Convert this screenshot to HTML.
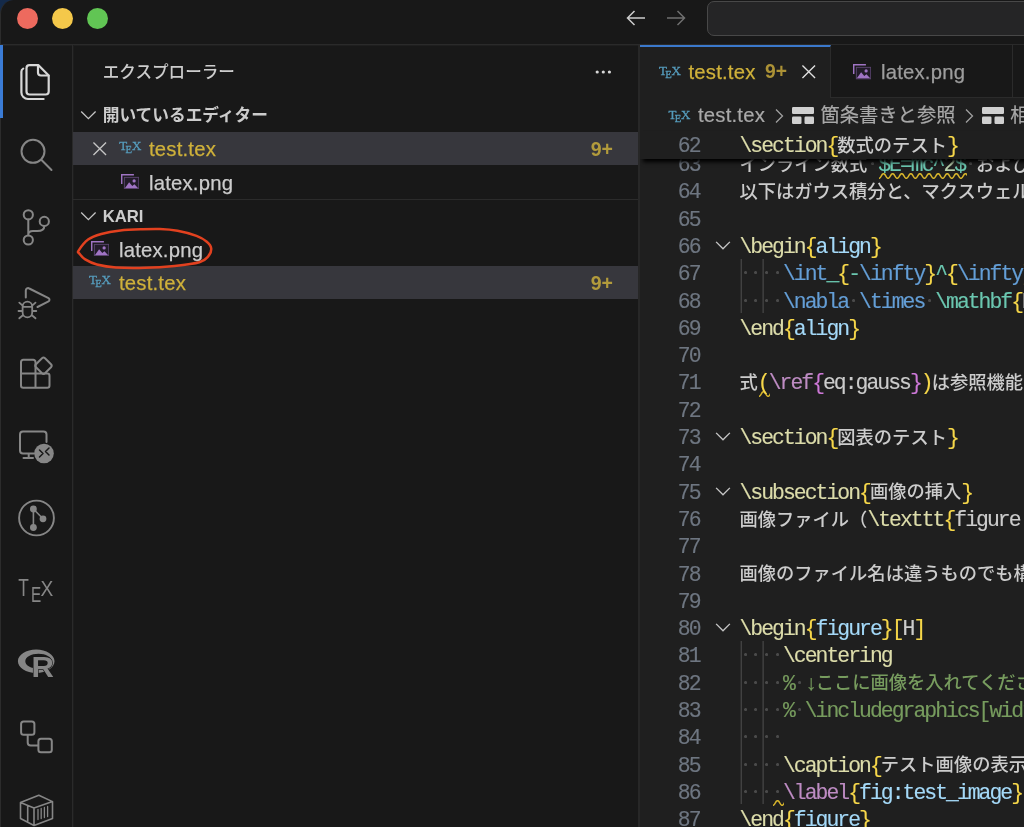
<!DOCTYPE html>
<html lang="ja">
<head>
<meta charset="utf-8">
<title>test.tex</title>
<style>
*{box-sizing:border-box;margin:0;padding:0}
html,body{width:1024px;height:827px;overflow:hidden;background:#181818}
body{position:relative;font-family:"Liberation Sans","Noto Sans CJK JP",sans-serif;color:#cccccc}
.abs{position:absolute}
#corner{left:0;top:0;width:14px;height:14px;background:#142a4a;z-index:0}
#win{left:0;top:0;width:1040px;height:840px;background:#181818;border-top-left-radius:14px;z-index:1;border-left:1px solid #2c2c2c}
#titlebar{left:0;top:0;width:1024px;height:45px;border-bottom:1px solid #2a2a2a;box-shadow:0 1px 0 #1f1f1f;z-index:2}
.tl{top:7.7px;width:21px;height:21px;border-radius:50%}
#search{left:707px;top:1px;width:340px;height:35px;background:#252526;border:1px solid #484848;border-radius:7px}
#activity{left:0;top:45px;width:73px;height:790px;border-right:1px solid #2a2a2a;box-shadow:1px 0 0 #1d1d1d;z-index:2}
#indicator{left:0;top:45px;width:3px;height:73px;background:#3a7bd5;z-index:3}
#sidebar{left:73px;top:45px;width:565px;height:790px;z-index:2}
#sidebar .row{position:absolute;left:0;width:565px;height:33px}
#sidebar .sel{background:#37373d}
.lbl{position:absolute;margin-top:0.5px;-webkit-text-stroke:0.25px currentColor;font-size:20.3px;letter-spacing:0.2px;line-height:33px;white-space:nowrap}
.warn{color:#cfb13a}
.hdr{position:absolute;font-size:16.7px;margin-left:-1.3px;margin-top:0.5px;font-weight:bold;line-height:33px;white-space:nowrap;color:#cccccc}
#editor{left:638px;top:45px;width:402px;height:790px;background:#1f1f1f;border-left:2px solid #272727;z-index:2;overflow:hidden}
#tabs{left:0;top:0;width:400px;height:53px;background:#181818;border-bottom:1px solid #2b2b2b}
.tab{position:absolute;top:0;height:53px;border-right:1px solid #2b2b2b}
#tab1{left:0;width:191px;background:#1f1f1f;border-top:2px solid #3b79cc;height:54px}
#tab2{left:191px;width:182px}
#crumbs{left:0;top:53px;width:400px;height:33.4px;background:#1f1f1f;white-space:nowrap;color:#a9a9a9}
.crl{-webkit-text-stroke:0.2px currentColor;font-size:20.3px;letter-spacing:0.2px;line-height:35px;white-space:nowrap;color:#a9a9a9}
#sticky{left:0;top:85.6px;width:400px;height:28.1px;background:#1f1f1f;box-shadow:2px 4px 4px -1px #000;z-index:5}
#code{left:0;top:0;width:400px;height:790px}
.ln{position:absolute;left:0;width:400px;height:27.29px;line-height:27.29px;font-family:"Liberation Mono","Noto Sans CJK JP",monospace;font-size:21.4px;letter-spacing:-1.97px;white-space:pre;color:#cccccc;-webkit-text-stroke:0.15px currentColor}
.ln .n{position:absolute;left:0;top:2.7px;width:59.6px;text-align:right;color:#6e7681}
.ln .t{position:absolute;left:99.5px;top:2.7px}
.ln .t .j{font-size:18.28px;letter-spacing:0;-webkit-text-stroke:0;font-weight:500;position:relative;top:-0.4px}
.y{color:#dcdcaa}.g{color:#f6d74a}.b{color:#649ed6}.t2{color:#6bc7b0}.lb{color:#a4d9f8}.c{color:#779c5e}.p{color:#be8cc3}.m{color:#cd78d7}.num{color:#b9cfac}
.sqg{position:absolute;top:23.3px;height:6px;overflow:hidden}
.ws{background:radial-gradient(circle at 5.6px 10.6px,#4a4a4a 1.1px,rgba(74,74,74,0) 1.9px)}
.guide{position:absolute;width:1px;background:#505050}
.fold{position:absolute;left:73px;top:4px;width:20px;height:20px}
.sq{background:none}

.tex{position:absolute;font-family:"Liberation Serif",serif;color:#519aba;white-space:nowrap;line-height:1;height:14px;width:22px;-webkit-text-stroke:0.3px #5a9fc0}
.tex b{position:absolute;font-weight:normal;font-size:13px;top:0}
.tex b.e{font-size:10.6px;top:6.2px}
.imgic{position:absolute;width:18.2px;height:15.3px;margin:0.3px 0 0 0.2px}
.chev{position:absolute;width:16px;height:16px}
.ai{position:absolute;left:0;width:72px;height:72px}
.tabl{position:absolute;-webkit-text-stroke:0.25px currentColor;font-size:20.3px;letter-spacing:0.2px;line-height:24px;white-space:nowrap}
</style>
</head>
<body>
<div id="root" style="position:absolute;left:0;top:0;width:1024px;height:827px;will-change:transform;overflow:hidden">
<div id="corner" class="abs"></div>
<div id="win" class="abs"></div>

<div id="titlebar" class="abs">
  <div class="abs tl" style="left:16.7px;background:#ed6a5e"></div>
  <div class="abs tl" style="left:52px;background:#f4c84a"></div>
  <div class="abs tl" style="left:86.8px;background:#61c554"></div>
  <div id="search" class="abs"></div>
<svg class="abs" style="left:626px;top:9px;width:20px;height:18px" viewBox="0 0 20 18"><path d="M19 9H1.500M8.500 2 1.500 9l7 7" fill="none" stroke="#cccccc" stroke-width="1.500"/></svg>
<svg class="abs" style="left:666px;top:9px;width:20px;height:18px" viewBox="0 0 20 18"><path d="M1 9h17.500M11.500 2l7 7-7 7" fill="none" stroke="#6f6f6f" stroke-width="1.500"/></svg>
</div>

<div id="indicator" class="abs"></div>
<div id="activity" class="abs">
<!--ACT-->
<svg class="abs" style="left:0;top:0;width:72px;height:790px" viewBox="0 45 72 790" fill="none" stroke="#868686" stroke-width="2" stroke-linecap="round" stroke-linejoin="round">
<!-- files -->
<g stroke="#d7d7d7" stroke-width="2.2">
<path d="M29.500 65.200H38.500L48.700 75.500V91.500a3 3 0 0 1-3 3H29.500a3 3 0 0 1-3-3V68.200a3 3 0 0 1 3-3Z"/>
<path d="M38 65.500V72.500a3 3 0 0 0 3 3H48.500"/>
<path d="M23.2 68.6A3.4 3.4 0 0 0 21.400 71.700V92.400a6.600 6.600 0 0 0 6.600 6.600H43.600"/>
</g>
<!-- search -->
<circle cx="33" cy="151.300" r="11.500"/>
<path d="M41.300 159.800 51.500 170"/>
<!-- source control -->
<circle cx="28.300" cy="214.800" r="4.600"/>
<circle cx="28.300" cy="240" r="4.600"/>
<circle cx="44.300" cy="221.400" r="4.600"/>
<path d="M28.300 219.500V235.300M44.300 226c0 4-3 5-7 5H33c-2.500 0-4.700 1-4.700 3.500"/>
<!-- debug -->
<path d="M25.800 297.500V290.500a2.300 2.300 0 0 1 3.500-2L48.500 298.200a1.800 1.800 0 0 1 0 3.200L37.500 307"/>
<path d="M22.6 306.5a4.8 4.8 0 0 1 9.6 0V312.5a4.8 4.8 0 0 1-9.6 0ZM22.6 306.8H32.2M22.4 311H18.5M32.4 311H36.3M22.9 305.8 19.3 302.6M31.9 305.8 35.5 302.6M23.2 315 19.3 318.3M31.6 315 35.5 318.3" stroke-width="1.8"/>
<!-- extensions -->
<path d="M35.500 373.600V362a2.200 2.200 0 0 0-2.200-2.200H23.200a2.200 2.200 0 0 0-2.200 2.200V385.500a2.200 2.200 0 0 0 2.200 2.200H47.300a2.200 2.200 0 0 0 2.200-2.200V375.800a2.200 2.200 0 0 0-2.200-2.200H21M35.500 373.600V387.700"/>
<path d="M42 358.200a2.200 2.200 0 0 1 3 0l6 6a2.200 2.200 0 0 1 0 3l-6 6a2.200 2.200 0 0 1-3 0l-6-6a2.200 2.200 0 0 1 0-3Z"/>
<!-- remote -->
<path d="M34 453.500H23a3 3 0 0 1-3-3V434.500a3 3 0 0 1 3-3H43.500a3 3 0 0 1 3 3V442M28.700 453.500V458M23.500 458H33"/>
<circle cx="44" cy="453.500" r="9.800" fill="#868686" stroke="none"/>
<path d="M39.500 450 43 453.500 39.500 457M49 448 45.500 451.500 49 455" stroke="#181818" stroke-width="1.500"/>
<!-- git graph -->
<circle cx="36.500" cy="518" r="17.400" stroke-width="1.900"/>
<g fill="#868686" stroke="none"><circle cx="33.400" cy="509" r="3.400"/><circle cx="33.400" cy="527.500" r="3.400"/><circle cx="43" cy="518.800" r="3.400"/></g>
<path d="M33.400 509V527.500M33.400 509 43 518.800" stroke-width="1.600"/>
<!-- R logo -->
<path d="M36.200 649.500c-10.100 0-18.300 5.200-18.300 11.700s8.200 11.700 18.300 11.700 18.300-5.200 18.300-11.700-8.200-11.700-18.300-11.700Zm2.300 4.300c7.400 0 13.200 3.200 13.200 7.400s-5.800 7.400-13.200 7.400-13.200-3.200-13.200-7.400 5.800-7.400 13.200-7.400Z" fill="#868686" stroke="none" fill-rule="evenodd"/>
<!-- flow -->
<rect x="21.100" y="721.400" width="13.300" height="13.300" rx="2.500"/>
<rect x="38.400" y="738.800" width="13.400" height="13.400" rx="2.500"/>
<path d="M27.700 735V742.500a3 3 0 0 0 3 3H38"/>
<!-- container -->
<path d="M38.800 795.200 52.500 801.600V818.500L34 825.500 20.500 818.500V802.600ZM20.500 802.600 34 808 52.500 801.600M34 808V825.500M27.700 805.500V822" stroke-width="1.600"/>
<path d="M38 809.500V819.500M41.200 808.500V818.500M44.400 807.500V817.500M47.600 806.500V816.500" stroke-width="1.300"/>
</svg>
<svg class="abs" style="left:14px;top:527px;width:44px;height:34px;overflow:visible" viewBox="0 0 44 34"><g font-family="Liberation Sans, sans-serif" fill="#868686"><text x="4.3" y="24.4" font-size="23.8" textLength="10.6" lengthAdjust="spacingAndGlyphs">T</text><text x="16.9" y="29.8" font-size="22.6" textLength="10.2" lengthAdjust="spacingAndGlyphs">E</text><text x="26.5" y="24.4" font-size="22.6" textLength="12.8" lengthAdjust="spacingAndGlyphs">X</text></g></svg>
<svg class="abs" style="left:14px;top:600px;width:44px;height:40px;overflow:visible" viewBox="0 0 44 40"><text x="17.6" y="32" font-family="Liberation Sans, sans-serif" font-weight="bold" font-size="29" fill="#868686" stroke="#181818" stroke-width="1.2" paint-order="stroke" textLength="22.4" lengthAdjust="spacingAndGlyphs">R</text></svg>
<!--/ACT-->
</div>

<div id="sidebar" class="abs">
<!--SIDE-->
<div class="abs" style="left:29.7px;top:15.7px;font-size:16.6px;font-weight:500;line-height:24px;white-space:nowrap;color:#cccccc">エクスプローラー</div>
<svg class="abs" style="left:521px;top:22px;width:20px;height:10px" viewBox="0 0 20 10"><circle cx="3.2" cy="5" r="1.6" fill="#d8d8d8"/><circle cx="9.300" cy="5" r="1.600" fill="#d8d8d8"/><circle cx="15.400" cy="5" r="1.600" fill="#d8d8d8"/></svg>
<svg class="chev" style="left:7px;top:62px;width:17px" viewBox="0 0 17 16"><path d="M1.200 4.500 8.400 11.700l7.200-7.200" fill="none" stroke="#c5c5c5" stroke-width="1.300"/></svg>
<div class="hdr" style="left:31px;top:53.5px">開いているエディター</div>
<div class="row sel" style="top:87px"></div>
<svg class="chev" style="left:18.600px;top:95.500px;width:15.500px;height:15.500px" viewBox="0 0 16 16"><path d="M1.500 1.500l13 13M14.500 1.500l-13 13" fill="none" stroke="#c5c5c5" stroke-width="1.400"/></svg>
<span class="tex" style="left:46.3px;top:94.3px"><b style="left:0">T</b><b class="e" style="left:6.3px">E</b><b style="left:12.6px">X</b></span>
<div class="lbl warn" style="left:76px;top:87px">test.tex</div>
<div class="lbl warn" style="left:517px;top:87px;font-size:19.5px;letter-spacing:0;font-weight:bold;color:#b29b3c;-webkit-text-stroke:0;margin-left:0.7px">9+</div>
<svg class="imgic" style="left:47.5px;top:128.5px" viewBox="0 0 19 16"><path d="M0.75 10.5V0.75H13.5" stroke="#a074c4" stroke-width="1.5" fill="none"/><rect x="3.5" y="3.5" width="15" height="12" fill="#221c29" stroke="#5a4470" stroke-width="1"/><path d="M4 15L8.500 8.500 11.800 12.500 14 10.800 18 15Z" fill="#a074c4"/><circle cx="13.700" cy="7.200" r="1.700" fill="#a074c4"/></svg>
<div class="lbl" style="left:76px;top:121px">latex.png</div>
<div class="abs" style="left:0;top:153.5px;width:566px;height:1px;background:#2b2b2b"></div>
<svg class="chev" style="left:7px;top:163px;width:17px" viewBox="0 0 17 16"><path d="M1.200 4.500 8.400 11.700l7.200-7.200" fill="none" stroke="#c5c5c5" stroke-width="1.300"/></svg>
<div class="hdr" style="left:31px;top:154.5px">KARI</div>
<svg class="imgic" style="left:17.5px;top:195.5px" viewBox="0 0 19 16"><path d="M0.75 10.5V0.75H13.5" stroke="#a074c4" stroke-width="1.5" fill="none"/><rect x="3.5" y="3.5" width="15" height="12" fill="#221c29" stroke="#5a4470" stroke-width="1"/><path d="M4 15L8.500 8.500 11.800 12.500 14 10.800 18 15Z" fill="#a074c4"/><circle cx="13.700" cy="7.200" r="1.700" fill="#a074c4"/></svg>
<div class="lbl" style="left:46px;top:188px">latex.png</div>
<div class="row sel" style="top:220.5px"></div>
<span class="tex" style="left:16px;top:228.1px"><b style="left:0">T</b><b class="e" style="left:6.3px">E</b><b style="left:12.6px">X</b></span>
<div class="lbl warn" style="left:46px;top:221px">test.tex</div>
<div class="lbl warn" style="left:517px;top:221px;font-size:19.5px;letter-spacing:0;font-weight:bold;color:#b29b3c;-webkit-text-stroke:0;margin-left:0.7px">9+</div>
<svg class="abs" style="z-index:4;left:0px;top:178px;width:150px;height:52px" viewBox="0 0 150 52"><path d="M5.6 27.6C7.1 25.3 11.3 19.4 15.1 16.6C18.9 13.8 22.9 12.5 28.3 11.0C33.7 9.5 40.5 8.3 47.3 7.5C54.1 6.7 62.7 6.5 69.3 6.3C75.9 6.0 81.0 5.8 86.9 6.0C92.8 6.2 98.4 6.6 104.5 7.8C110.6 8.9 118.6 11.1 123.5 12.9C128.4 14.7 131.4 16.7 133.8 18.8C136.2 20.9 138.0 23.0 138.2 25.4C138.4 27.8 137.2 31.1 135.2 33.4C133.2 35.7 132.0 37.7 126.4 39.3C120.8 40.9 110.5 42.0 101.5 42.9C92.5 43.8 82.0 44.5 72.2 44.7C62.4 45.0 51.0 44.9 42.9 44.4C34.8 43.9 29.0 42.8 23.9 41.5C18.8 40.2 15.1 38.2 12.2 36.4C9.3 34.6 7.4 32.0 6.3 30.5C5.2 29.0 4.1 29.9 5.6 27.6Z" fill="none" stroke="#e2411f" stroke-width="2.5" stroke-linejoin="round"/></svg>
<!--/SIDE-->
</div>

<div id="editor" class="abs">
  <div id="code" class="abs">
<!--CODE-->

<div class="guide" style="left:101px;transform:translateX(-0.3px);top:213.6px;height:54.6px"></div>
<div class="guide" style="left:123px;transform:translateX(-0.4px);top:213.6px;height:54.6px"></div>
<div class="guide" style="left:101px;transform:translateX(-0.3px);top:595.7px;height:163.8px"></div>
<div class="guide" style="left:123px;transform:translateX(-0.4px);top:595.7px;height:163.8px"></div>
<div class="ln" style="top:104.48px"><span class="n">63</span><svg class="sqg" style="left:238.77px;width:88.37px" viewBox="0 0 88.37 6"><path d="M-6.82 3 q2.27 -4.60 4.55 0 t4.55 0 t4.55 0 t4.55 0 t4.55 0 t4.55 0 t4.55 0 t4.55 0 t4.55 0 t4.55 0 t4.55 0 t4.55 0 t4.55 0 t4.55 0 t4.55 0 t4.55 0 t4.55 0 t4.55 0 t4.55 0 t4.55 0 t4.55 0 t4.55 0 t4.55 0" fill="none" stroke="#d6b42c" stroke-width="1.6" stroke-linejoin="round"/></svg><span class="t"><span class="j">インライン数式</span><span class="ws"> </span><span class="t2 sq">$E=mc^<span class="num">2</span>$</span><span class="ws"> </span><span class="j">および</span></span></div>
<div class="ln" style="top:131.77px"><span class="n">64</span><span class="t"><span class="j">以下はガウス積分と、マクスウェル方程式</span></span></div>
<div class="ln" style="top:159.06px"><span class="n">65</span><span class="t"></span></div>
<div class="ln" style="top:186.35px"><span class="n">66</span><svg class="fold" viewBox="0 0 16 16"><path d="M2.5 5.5 8 11l5.500-5.500" fill="none" stroke="#c5c5c5" stroke-width="1.1"/></svg><span class="t"><span class="y">\begin</span><span class="g">{</span><span class="lb">align</span><span class="g">}</span></span></div>
<div class="ln" style="top:213.64px"><span class="n">67</span><span class="t"><span class="ws"> </span><span class="ws"> </span><span class="ws"> </span><span class="ws"> </span><span class="b">\int</span><span class="t2">_</span><span class="g">{</span><span class="t2">-</span><span class="b">\infty</span><span class="g">}</span><span class="t2">^</span><span class="g">{</span><span class="b">\infty</span><span class="g">}</span></span></div>
<div class="ln" style="top:240.93px"><span class="n">68</span><span class="t"><span class="ws"> </span><span class="ws"> </span><span class="ws"> </span><span class="ws"> </span><span class="b">\nabla</span><span class="ws"> </span><span class="b">\times</span><span class="ws"> </span><span class="t2">\mathbf</span><span class="g">{</span>E<span class="g">}</span></span></div>
<div class="ln" style="top:268.22px"><span class="n">69</span><span class="t"><span class="y">\end</span><span class="g">{</span><span class="lb">align</span><span class="g">}</span></span></div>
<div class="ln" style="top:295.51px"><span class="n">70</span><span class="t"></span></div>
<div class="ln" style="top:322.80px"><span class="n">71</span><svg class="sqg" style="left:118.76px;width:10.87px" viewBox="0 0 10.87 6"><path d="M-6.82 3 q2.27 -4.60 4.55 0 t4.55 0 t4.55 0 t4.55 0 t4.55 0 t4.55 0" fill="none" stroke="#d6b42c" stroke-width="1.6" stroke-linejoin="round"/></svg><span class="t"><span class="j">式</span><span class="g">(</span><span class="p">\ref</span><span class="m">{</span>eq:gauss<span class="m">}</span><span class="g">)</span><span class="j">は参照機能の</span></span></div>
<div class="ln" style="top:350.09px"><span class="n">72</span><span class="t"></span></div>
<div class="ln" style="top:377.38px"><span class="n">73</span><svg class="fold" viewBox="0 0 16 16"><path d="M2.5 5.5 8 11l5.500-5.500" fill="none" stroke="#c5c5c5" stroke-width="1.1"/></svg><span class="t"><span class="y">\section</span><span class="g">{</span><span class="j">図表のテスト</span><span class="g">}</span></span></div>
<div class="ln" style="top:404.67px"><span class="n">74</span><span class="t"></span></div>
<div class="ln" style="top:431.96px"><span class="n">75</span><svg class="fold" viewBox="0 0 16 16"><path d="M2.5 5.5 8 11l5.500-5.500" fill="none" stroke="#c5c5c5" stroke-width="1.1"/></svg><span class="t"><span class="y">\subsection</span><span class="g">{</span><span class="j">画像の挿入</span><span class="g">}</span></span></div>
<div class="ln" style="top:459.25px"><span class="n">76</span><span class="t"><span class="j">画像ファイル（</span><span class="y">\texttt</span><span class="g">{</span>figure.png</span></div>
<div class="ln" style="top:486.54px"><span class="n">77</span><span class="t"></span></div>
<div class="ln" style="top:513.83px"><span class="n">78</span><span class="t"><span class="j">画像のファイル名は違うものでも構いません</span></span></div>
<div class="ln" style="top:541.12px"><span class="n">79</span><span class="t"></span></div>
<div class="ln" style="top:568.41px"><span class="n">80</span><svg class="fold" viewBox="0 0 16 16"><path d="M2.5 5.5 8 11l5.500-5.500" fill="none" stroke="#c5c5c5" stroke-width="1.1"/></svg><span class="t"><span class="y">\begin</span><span class="g">{</span><span class="lb">figure</span><span class="g">}[</span>H<span class="g">]</span></span></div>
<div class="ln" style="top:595.70px"><span class="n">81</span><span class="t"><span class="ws"> </span><span class="ws"> </span><span class="ws"> </span><span class="ws"> </span><span class="y">\centering</span></span></div>
<div class="ln" style="top:622.99px"><span class="n">82</span><span class="t"><span class="ws"> </span><span class="ws"> </span><span class="ws"> </span><span class="ws"> </span><span class="c">%</span><span class="ws"> </span><span class="c">↓<span class="j">ここに画像を入れてください</span></span></span></div>
<div class="ln" style="top:650.28px"><span class="n">83</span><span class="t"><span class="ws"> </span><span class="ws"> </span><span class="ws"> </span><span class="ws"> </span><span class="c">%</span><span class="ws"> </span><span class="c">\includegraphics[width</span></span></div>
<div class="ln" style="top:677.57px"><span class="n">84</span><span class="t"><span class="ws"> </span><span class="ws"> </span><span class="ws"> </span><span class="ws"> </span></span></div>
<div class="ln" style="top:704.86px"><span class="n">85</span><span class="t"><span class="ws"> </span><span class="ws"> </span><span class="ws"> </span><span class="ws"> </span><span class="y">\caption</span><span class="g">{</span><span class="j">テスト画像の表示</span></span></div>
<div class="ln" style="top:732.15px"><span class="n">86</span><svg class="sqg" style="left:133.11px;width:10.87px" viewBox="0 0 10.87 6"><path d="M-6.82 3 q2.27 -4.60 4.55 0 t4.55 0 t4.55 0 t4.55 0 t4.55 0 t4.55 0" fill="none" stroke="#d6b42c" stroke-width="1.6" stroke-linejoin="round"/></svg><span class="t"><span class="ws"> </span><span class="ws"> </span><span class="ws"> </span><span class="ws"> </span><span class="p">\label</span><span class="g">{</span><span class="lb">fig:test_image</span><span class="g">}</span></span></div>
<div class="ln" style="top:759.44px"><span class="n">87</span><span class="t"><span class="y">\end</span><span class="g">{</span><span class="lb">figure</span><span class="g">}</span></span></div>
<div class="ln" style="top:786.73px"><span class="n">88</span><span class="t"></span></div>
<!--/CODE-->
</div>
  <div id="tabs" class="abs">
    <div id="tab1" class="tab"></div>
<span class="tex" style="left:19px;top:18.8px"><b style="left:0">T</b><b class="e" style="left:6.3px">E</b><b style="left:12.6px">X</b></span><div class="tabl warn" style="left:48.5px;top:15px">test.tex</div><div class="tabl warn" style="left:125px;top:15px;color:#ac9236;font-size:19.3px;font-weight:bold;letter-spacing:0;-webkit-text-stroke:0">9+</div><svg class="chev" style="left:160.7px;top:18.8px;width:15.5px;height:15.5px" viewBox="0 0 16 16"><path d="M1.500 1.500l13 13M14.500 1.500l-13 13" fill="none" stroke="#e0e0e0" stroke-width="1.400"/></svg>
    <div id="tab2" class="tab"></div>
<svg class="imgic" style="left:212.5px;top:19px" viewBox="0 0 19 16"><path d="M0.75 10.5V0.75H13.5" stroke="#a074c4" stroke-width="1.5" fill="none"/><rect x="3.5" y="3.5" width="15" height="12" fill="#221c29" stroke="#5a4470" stroke-width="1"/><path d="M4 15L8.500 8.500 11.800 12.500 14 10.800 18 15Z" fill="#a074c4"/><circle cx="13.700" cy="7.200" r="1.700" fill="#a074c4"/></svg><div class="tabl" style="left:241px;top:15px;color:#9d9d9d">latex.png</div>
  </div>
  <div id="crumbs" class="abs">
<span class="tex" style="left:28.5px;top:9.6px"><b style="left:0">T</b><b class="e" style="left:6.3px">E</b><b style="left:12.6px">X</b></span>
<div class="abs crl" style="left:58px;top:0">test.tex</div>
<svg class="abs" style="left:134.5px;top:10px;width:9px;height:16px" viewBox="0 0 9 16"><path d="M1 1.500l6.500 6.500L1 14.500" fill="none" stroke="#a0a0a0" stroke-width="1.300"/></svg>
<svg class="abs" style="left:151.5px;top:9px;width:22px;height:17px" viewBox="0 0 22 17"><rect x="0" y="0" width="22" height="7" rx="1.2" fill="#d0d0d0"/><rect x="0" y="9.500" width="9.500" height="7.500" rx="1.200" fill="#d0d0d0"/><rect x="12.500" y="9.500" width="9.500" height="7.500" rx="1.200" fill="#d0d0d0"/></svg>
<div class="abs crl" style="left:180.5px;top:0;font-size:19.3px;letter-spacing:0">箇条書きと参照</div>
<svg class="abs" style="left:325px;top:10px;width:9px;height:16px" viewBox="0 0 9 16"><path d="M1 1.500l6.500 6.500L1 14.500" fill="none" stroke="#a0a0a0" stroke-width="1.300"/></svg>
<svg class="abs" style="left:342.3px;top:9px;width:22px;height:17px" viewBox="0 0 22 17"><rect x="0" y="0" width="22" height="7" rx="1.2" fill="#d0d0d0"/><rect x="0" y="9.500" width="9.500" height="7.500" rx="1.200" fill="#d0d0d0"/><rect x="12.500" y="9.500" width="9.500" height="7.500" rx="1.200" fill="#d0d0d0"/></svg>
<div class="abs crl" style="left:370.3px;top:0;font-size:19.3px;letter-spacing:0">相互参照</div>
</div>
  <div id="sticky" class="abs"><div class="ln" style="top:0"><span class="n">62</span><span class="t"><span class="y">\section</span><span class="g">{</span><span class="j">数式のテスト</span><span class="g">}</span></span></div></div>
</div>
</div>
</body>
</html>
